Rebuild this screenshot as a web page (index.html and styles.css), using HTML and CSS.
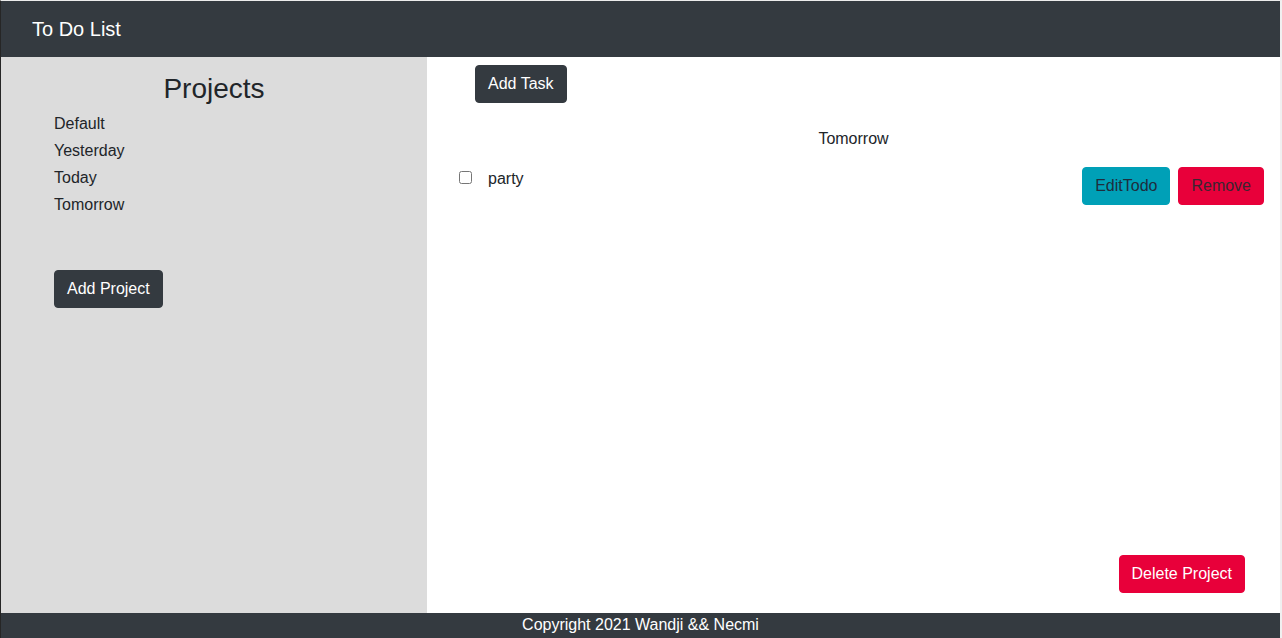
FILE: index.html
```html
<!DOCTYPE html>
<html lang="en">
<head>
<meta charset="utf-8">
<title>To Do List</title>
<link rel="stylesheet" href="styles.css">
</head>
<body>
<div class="page">
  <header class="topbar">To Do List</header>
  <div class="content">
    <aside class="sidebar">
      <h2 class="sidebar-title">Projects</h2>
      <ul class="project-list">
        <li>Default</li>
        <li>Yesterday</li>
        <li>Today</li>
        <li>Tomorrow</li>
      </ul>
      <button class="btn btn-dark add-project">Add Project</button>
    </aside>
    <main class="main">
      <button class="btn btn-dark add-task">Add Task</button>
      <div class="project-name">Tomorrow</div>
      <div class="task">
        <input type="checkbox" class="task-check">
        <span class="task-title">party</span>
        <div class="task-actions">
          <button class="btn btn-info">EditTodo</button>
          <button class="btn btn-danger">Remove</button>
        </div>
      </div>
      <div class="main-bottom">
        <button class="btn btn-danger btn-light-text">Delete Project</button>
      </div>
    </main>
  </div>
  <footer class="footer">Copyright 2021 Wandji &amp;&amp; Necmi</footer>
</div>
</body>
</html>
```
FILE: styles.css
```css
* { box-sizing: border-box; }
html, body { margin: 0; padding: 0; }
body {
  font-family: "Liberation Sans", Arial, sans-serif;
  font-size: 16px;
  color: #212529;
  background: #fff;
}
.page {
  height: 638px;
  display: flex;
  flex-direction: column;
  border-top: 1px solid #ececec;
  border-left: 1px solid #262626;
  border-right: 2px solid #f0f0f0;
}
.topbar {
  height: 56px;
  flex: none;
  background: #343a40;
  color: #fff;
  font-size: 20px;
  line-height: 56px;
  padding-left: 31px;
}
.content {
  flex: 1;
  display: flex;
  min-height: 0;
}
.sidebar {
  width: 426px;
  flex: none;
  background: #dcdcdc;
  padding-top: 15px;
}
.sidebar-title {
  margin: 0;
  text-align: center;
  font-size: 28px;
  font-weight: 400;
  line-height: 34px;
}
.project-list {
  list-style: none;
  margin: 4px 0 0;
  padding: 0 0 0 53px;
}
.project-list li {
  height: 27px;
  line-height: 27px;
}
.btn {
  font-family: inherit;
  font-size: 16px;
  line-height: 24px;
  padding: 6px 12px;
  border: 1px solid transparent;
  border-radius: 4px;
  cursor: pointer;
}
.btn-dark { background: #343a40; color: #fff; border-color: #343a40; }
.btn-info { background: #00a0b7; color: #1f2d3d; border-color: #00a0b7; }
.btn-danger { background: #e8003a; color: #3a2530; border-color: #e8003a; }
.btn-light-text { color: #fff; }
.add-project {
  margin: 52px 0 0 53px;
}
.main {
  flex: 1;
  display: flex;
  flex-direction: column;
  padding: 8px 16px 20px 32px;
}
.add-task {
  align-self: flex-start;
  margin-left: 16px;
}
.project-name {
  text-align: center;
  margin: 24px 0 0 -16px;
  line-height: 24px;
}
.task {
  display: flex;
  align-items: flex-start;
  margin-top: 16px;
}
.task-check {
  margin: 4px 16px 0 0;
  width: 13px;
  height: 13px;
}
.task-title {
  line-height: 22px;
  padding-top: 1px;
}
.task-actions {
  margin-left: auto;
  display: flex;
  gap: 8px;
}
.main-bottom {
  margin-top: auto;
  display: flex;
  justify-content: flex-end;
  padding-right: 19px;
}
.footer {
  height: 25px;
  flex: none;
  background: #343a40;
  color: #fff;
  text-align: center;
  line-height: 24px;
}
```
